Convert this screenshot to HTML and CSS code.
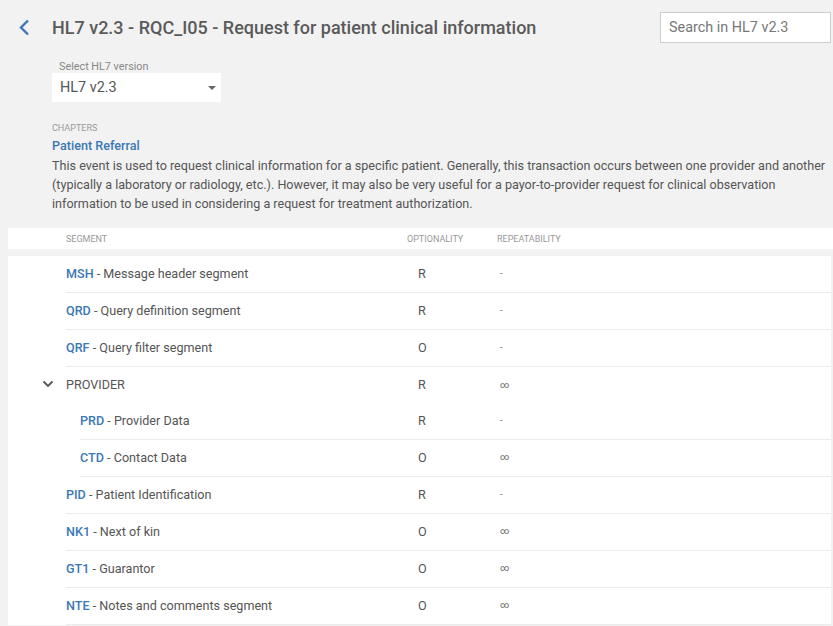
FILE: index.html
```html
<!DOCTYPE html>
<html lang="en">
<head>
<meta charset="utf-8">
<title>HL7 v2.3 - RQC_I05</title>
<link rel="stylesheet" href="styles.css">
</head>
<body>
<div class="page">
  <header class="topbar">
    <a class="back" href="#" aria-label="Back">
      <svg width="12" height="17" viewBox="0 0 12 17"><path d="M10 1.5 L3 8.5 L10 15.5" fill="none" stroke="#3d78b6" stroke-width="2.4"/></svg>
    </a>
    <h1 class="title">HL7 v2.3 - RQC_I05 - Request for patient clinical information</h1>
    <input class="search" type="text" placeholder="Search in HL7 v2.3">
  </header>

  <section class="version">
    <div class="version-label">Select HL7 version</div>
    <div class="select">
      <span>HL7 v2.3</span>
      <span class="caret"></span>
    </div>
  </section>

  <section class="chapter">
    <div class="chapter-label">CHAPTERS</div>
    <div class="chapter-name">Patient Referral</div>
    <p class="chapter-desc">This event is used to request clinical information for a specific patient. Generally, this transaction occurs between one provider and another (typically a laboratory or radiology, etc.). However, it may also be very useful for a payor-to-provider request for clinical observation information to be used in considering a request for treatment authorization.</p>
  </section>

  <div class="thead">
    <div class="c-seg">SEGMENT</div>
    <div class="c-opt">OPTIONALITY</div>
    <div class="c-rep">REPEATABILITY</div>
  </div>

  <div class="tbody">
    <div class="row"><div class="c-seg"><b>MSH</b> - Message header segment</div><div class="c-opt">R</div><div class="c-rep">-</div></div>
    <div class="row"><div class="c-seg"><b>QRD</b> - Query definition segment</div><div class="c-opt">R</div><div class="c-rep">-</div></div>
    <div class="row"><div class="c-seg"><b>QRF</b> - Query filter segment</div><div class="c-opt">O</div><div class="c-rep">-</div></div>
    <div class="row group"><div class="c-seg"><span class="toggle"><svg width="12" height="8" viewBox="0 0 12 8"><path d="M1.5 1.5 L6 6 L10.5 1.5" fill="none" stroke="#555" stroke-width="1.8"/></svg></span>PROVIDER</div><div class="c-opt">R</div><div class="c-rep">∞</div></div>
    <div class="row nested"><div class="c-seg"><b>PRD</b> - Provider Data</div><div class="c-opt">R</div><div class="c-rep">-</div></div>
    <div class="row nested"><div class="c-seg"><b>CTD</b> - Contact Data</div><div class="c-opt">O</div><div class="c-rep">∞</div></div>
    <div class="row"><div class="c-seg"><b>PID</b> - Patient Identification</div><div class="c-opt">R</div><div class="c-rep">-</div></div>
    <div class="row"><div class="c-seg"><b>NK1</b> - Next of kin</div><div class="c-opt">O</div><div class="c-rep">∞</div></div>
    <div class="row"><div class="c-seg"><b>GT1</b> - Guarantor</div><div class="c-opt">O</div><div class="c-rep">∞</div></div>
    <div class="row"><div class="c-seg"><b>NTE</b> - Notes and comments segment</div><div class="c-opt">O</div><div class="c-rep">∞</div></div>
  </div>
</div>
</body>
</html>
```
FILE: styles.css
```css
html, body {
  margin: 0;
  padding: 0;
  background: #f2f2f2;
  font-family: Roboto, "Liberation Sans", Arial, sans-serif;
  color: #555;
}
.page {
  width: 833px;
  overflow: hidden;
}
.topbar {
  display: flex;
  align-items: center;
  height: 54px;
}
.back {
  display: flex;
  width: 52px;
  padding-left: 18px;
  box-sizing: border-box;
}
.title {
  flex: 1;
  margin: 0;
  font-size: 18px;
  font-weight: 500;
  color: #5a5a5a;
}
.search {
  width: 171px;
  height: 31px;
  box-sizing: border-box;
  border: 1px solid #ccc;
  background: #fff;
  margin: 0 2px 0 0;
  padding: 0 8px;
  font-family: inherit;
  font-size: 14.4px;
  color: #555;
  outline: none;
}
.search::placeholder {
  color: #777;
}
.version {
  margin-left: 52px;
  margin-top: 7px;
}
.version-label {
  font-size: 10.8px;
  color: #888;
  padding-left: 7px;
  line-height: 12px;
}
.select {
  width: 169px;
  height: 29px;
  background: #fff;
  display: flex;
  align-items: center;
  justify-content: space-between;
  box-sizing: border-box;
  padding: 0 5px 0 8px;
  font-size: 14.4px;
  color: #555;
}
.caret {
  width: 0;
  height: 0;
  border-left: 4px solid transparent;
  border-right: 4px solid transparent;
  border-top: 4px solid #666;
  margin-top: 1px;
}
.chapter {
  margin-left: 52px;
  margin-top: 21px;
  margin-right: 6px;
}
.chapter-label {
  font-size: 9px;
  color: #999;
  line-height: 11px;
}
.chapter-name {
  font-size: 12.6px;
  font-weight: 500;
  color: #3b78b5;
  margin-top: 4px;
  line-height: 16px;
}
.chapter-desc {
  margin: 2px 0 0;
  font-size: 12.6px;
  line-height: 19px;
  color: #555;
}
.thead {
  display: flex;
  align-items: center;
  height: 21px;
  background: #fff;
  margin-left: 8px;
  margin-top: 15px;
  font-size: 9px;
  color: #999;
}
.thead .c-seg { padding-left: 58px; width: 341px; }
.thead .c-opt { width: 90px; }
.tbody {
  background: #fff;
  margin: 7px 2px 0 8px;
}
.row {
  display: flex;
  align-items: center;
  height: 36px;
  box-sizing: border-box;
  padding-bottom: 2px;
  height: 37px;
  margin-left: 58px;
  border-bottom: 1px solid #ebebeb;
  font-size: 12.6px;
  color: #555;
}
.row.group {
  border-bottom: none;
  height: 36px;
  padding-bottom: 1px;
}
.row.nested {
  margin-left: 72px;
}
.row .c-seg {
  width: 352px;
  position: relative;
}
.row.nested .c-seg {
  width: 338px;
}
.row .c-seg b {
  font-weight: 500;
  color: #3b78b5;
}
.toggle {
  position: absolute;
  left: -24px;
  top: 3px;
  display: flex;
}
.row .c-opt {
  width: 82px;
}
.row .c-rep {
  font-size: 9px;
  color: #666;
}
```
